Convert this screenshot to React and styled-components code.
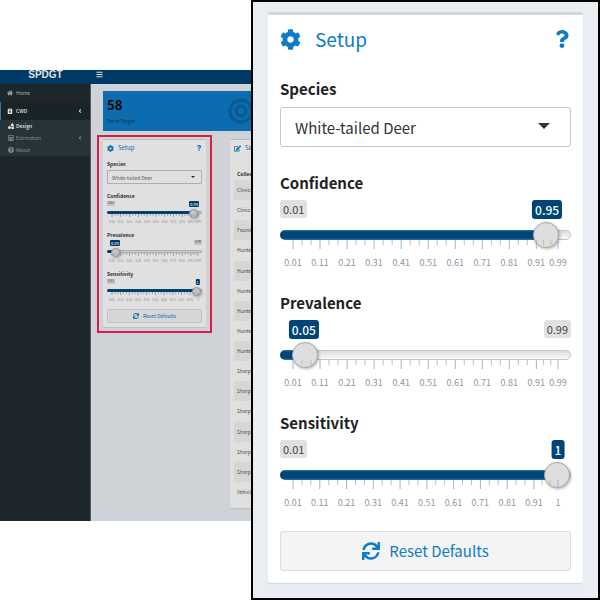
import React, { useId, useState } from "react";
import styled, { createGlobalStyle, ThemeProvider } from "styled-components";
import {
  FaAngleLeft,
  FaBars,
  FaBullseye,
  FaCalculator,
  FaCog,
  FaEdit,
  FaHome,
  FaNotesMedical,
  FaQuestion,
  FaQuestionCircle,
  FaShapes,
  FaSync,
} from "react-icons/fa";

const GlobalStyle = createGlobalStyle`
  *, *::before, *::after { box-sizing: border-box; }
  body {
    margin: 0;
    background: #fff;
    font-family: "Noto Sans CJK JP", "Noto Sans", sans-serif;
    color: #222;
  }
  button, input, select { font-family: inherit; margin: 0; }
  h1, h2, p, ul { margin: 0; padding: 0; }
`;

const large = {
  topBorder: 3, headHeight: 48, bodyTop: 14, pad: 12, radius: 3,
  title: 19, icon: 21, help: 18, iconGap: 14,
  label: 15, labelLine: 24, selectGap: 6, sliderGap: 5, fieldGap: 24,
  control: 40, select: 15, selectPad: 14, caretW: 12, caretH: 6, caretRight: 21,
  limit: 11, badge: 12, badgeH: 19, badgePad: 3, badgeRadius: 3,
  thumb: 26, track: 10, thumbTop: -9, rangeGap: 3, axisPull: 8, axisH: 27,
  tick: 9, minorTick: 5, axisFont: 9, axisBase: 26,
  button: 15, buttonIcon: 18, buttonGap: 9,
  selectColor: "#333", labelColor: "#222",
};

const small = {
  topBorder: 1, headHeight: 16, bodyTop: 4, pad: 4, radius: 1,
  title: 6, icon: 7, help: 6, iconGap: 4,
  label: 5, labelLine: 8, selectGap: 2, sliderGap: 1, fieldGap: 8,
  control: 14, select: 5, selectPad: 4, caretW: 4, caretH: 2, caretRight: 7,
  limit: 3, badge: 4, badgeH: 6, badgePad: 1, badgeRadius: 1,
  thumb: 9, track: 3, thumbTop: -3, rangeGap: 1, axisPull: 3, axisH: 9,
  tick: 3, minorTick: 2, axisFont: 3, axisBase: 9,
  button: 5, buttonIcon: 6, buttonGap: 4,
  selectColor: "#666", labelColor: "#333",
};

const m = (key) => ({ theme }) => `${theme[key]}px`;

/* Setup panel */

const Card = styled.section`
  background: #fff;
  border-top: ${m("topBorder")} solid #d2d6de;
  border-radius: ${m("radius")};
  box-shadow: 0 1px 1px rgba(0, 0, 0, 0.1);
`;

const CardHead = styled.header`
  display: flex;
  align-items: center;
  height: ${m("headHeight")};
  padding: 0 ${m("pad")};
  gap: ${m("iconGap")};
  color: #0d7dc8;
  svg { width: ${m("icon")}; height: ${m("icon")}; }
`;

const CardTitle = styled.h2`
  flex: 1;
  font-size: ${m("title")};
  line-height: ${m("labelLine")};
  font-weight: 400;
`;

const HelpButton = styled.button`
  display: flex;
  padding: 0;
  border: 0;
  background: none;
  color: inherit;
  svg { width: auto; height: ${m("help")}; }
`;

const CardBody = styled.div`
  padding: ${m("bodyTop")} ${m("pad")} ${m("pad")};
`;

const Field = styled.div`
  display: flex;
  flex-direction: column;
  margin-bottom: ${m("fieldGap")};
`;

const Label = styled.label`
  color: ${({ theme }) => theme.labelColor};
  font-size: ${m("label")};
  line-height: ${m("labelLine")};
  font-weight: 700;
`;

const SelectBox = styled.div`
  position: relative;
  display: flex;
  margin-top: ${m("selectGap")};
  &::after {
    content: "";
    position: absolute;
    right: ${m("caretRight")};
    top: 50%;
    margin-top: calc(${m("caretH")} * -2 / 3);
    border: solid transparent;
    border-width: ${m("caretH")} calc(${m("caretW")} / 2) 0;
    border-top-color: #333;
    pointer-events: none;
  }
`;

const Select = styled.select`
  appearance: none;
  flex: 1;
  min-width: 0;
  height: ${m("control")};
  padding: 0 ${m("selectPad")};
  border: 1px solid #c6c6c6;
  border-radius: ${m("badgeRadius")};
  background: #fff;
  color: ${({ theme }) => theme.selectColor};
  font-size: ${m("select")};
`;

const BadgeRow = styled.div`
  position: relative;
  display: flex;
  justify-content: space-between;
  height: ${m("badgeH")};
  margin-top: ${m("sliderGap")};
`;

const Limit = styled.span`
  height: calc(${m("badgeH")} - 1px);
  padding: 0 ${m("badgePad")};
  border-radius: ${m("badgeRadius")};
  background: #e1e1e1;
  color: #444;
  font-size: ${m("limit")};
  line-height: calc(${m("badgeH")} - 1px);
  visibility: ${({ $hidden }) => ($hidden ? "hidden" : "visible")};
`;

const ValueBadge = styled.output`
  position: absolute;
  left: calc(${m("thumb")} / 2 + (100% - ${m("thumb")}) * var(--ratio));
  transform: translateX(-50%);
  padding: 0 ${m("badgePad")};
  border-radius: ${m("badgeRadius")};
  background: #004577;
  color: #fff;
  font-size: ${m("badge")};
  font-weight: 500;
  line-height: ${m("badgeH")};
`;

const Range = styled.input`
  appearance: none;
  width: 100%;
  height: ${m("thumb")};
  margin: ${m("rangeGap")} 0 0;
  background: none;
  &::-webkit-slider-runnable-track {
    height: ${m("track")};
    border: 1px solid transparent;
    border-radius: ${m("track")};
    background:
      linear-gradient(#2a75b3, #004577 20%, #004577 80%, #2a75b3) 0 0 / calc(${m("thumb")} / 2 + (100% - ${m("thumb")}) * var(--ratio)) 100% no-repeat border-box,
      linear-gradient(#ddd, #eee 60%, #f8f8f8) padding-box,
      linear-gradient(#c4c4c4, #c4c4c4) border-box;
  }
  &::-webkit-slider-thumb {
    appearance: none;
    width: ${m("thumb")};
    height: ${m("thumb")};
    margin-top: ${m("thumbTop")};
    border: 1px solid #aaa;
    border-radius: 50%;
    background: #dedede;
    box-shadow: 1px 1px 3px rgba(0, 0, 0, 0.3);
  }
`;

const AxisBox = styled.div`
  height: ${m("axisH")};
  margin: calc(${m("axisPull")} * -1) calc(${m("thumb")} / 2) 0;
  pointer-events: none;
  svg { display: block; width: 100%; height: 100%; overflow: visible; }
  text { font-size: ${m("axisFont")}; fill: #8e989f; text-anchor: middle; }
`;

const TickLine = styled.line`
  stroke: ${({ $major }) => ($major ? "#8fb9de" : "#bcbcc4")};
  stroke-width: 1px;
`;

const ResetButton = styled.button`
  display: flex;
  align-items: center;
  justify-content: center;
  gap: ${m("buttonGap")};
  width: 100%;
  height: ${m("control")};
  padding: 0;
  border: 1px solid #ddd;
  border-radius: ${m("badgeRadius")};
  background: #f4f4f4;
  color: #0d7dc8;
  font-size: ${m("button")};
  line-height: ${m("labelLine")};
  svg { width: ${m("buttonIcon")}; height: ${m("buttonIcon")}; }
`;

function Axis({ max, metrics }) {
  const majors = [0.01, 0.11, 0.21, 0.31, 0.41, 0.51, 0.61, 0.71, 0.81, 0.91, max];
  const at = (v) => `${((v - 0.01) / (max - 0.01)) * 100}%`;
  const minors = majors.slice(0, -1).flatMap((v, i) => {
    const step = (majors[i + 1] - v) / 3;
    return [v + step, v + step * 2];
  });
  return (
    <AxisBox>
      <svg aria-hidden="true">
        {minors.map((v) => (
          <TickLine key={v} x1={at(v)} x2={at(v)} y1="0" y2={metrics.minorTick} />
        ))}
        {majors.map((v) => (
          <g key={v}>
            <TickLine $major x1={at(v)} x2={at(v)} y1="0" y2={metrics.tick} />
            <text x={at(v)} y={metrics.axisBase}>{v}</text>
          </g>
        ))}
      </svg>
    </AxisBox>
  );
}

function Slider({ label, max, value, onChange, metrics }) {
  const id = useId();
  const ratio = (value - 0.01) / (max - 0.01);
  return (
    <Field style={{ "--ratio": ratio }}>
      <Label htmlFor={id}>{label}</Label>
      <BadgeRow>
        <Limit $hidden={ratio < 0.12}>0.01</Limit>
        <Limit $hidden={ratio > 0.88}>{max}</Limit>
        <ValueBadge htmlFor={id}>{value}</ValueBadge>
      </BadgeRow>
      <Range
        id={id}
        type="range"
        min="0.01"
        max={max}
        step="0.01"
        value={value}
        onChange={(e) => onChange(Number(e.target.value))}
      />
      <Axis max={max} metrics={metrics} />
    </Field>
  );
}

const defaults = { Confidence: 0.95, Prevalence: 0.05, Sensitivity: 1 };
const limits = { Confidence: 0.99, Prevalence: 0.99, Sensitivity: 1 };

function SetupPanel({ metrics }) {
  const id = useId();
  const [values, setValues] = useState(defaults);
  return (
    <ThemeProvider theme={metrics}>
      <Card>
        <CardHead>
          <FaCog />
          <CardTitle>Setup</CardTitle>
          <HelpButton aria-label="Help"><FaQuestion /></HelpButton>
        </CardHead>
        <CardBody>
          <Field>
            <Label htmlFor={id}>Species</Label>
            <SelectBox>
              <Select id={id}><option>White-tailed Deer</option></Select>
            </SelectBox>
          </Field>
          {Object.keys(defaults).map((name) => (
            <Slider
              key={name}
              label={name}
              max={limits[name]}
              value={values[name]}
              metrics={metrics}
              onChange={(v) => setValues({ ...values, [name]: v })}
            />
          ))}
          <ResetButton onClick={() => setValues(defaults)}>
            <FaSync />
            Reset Defaults
          </ResetButton>
        </CardBody>
      </Card>
    </ThemeProvider>
  );
}

/* Page frame */

const Page = styled.main`
  display: grid;
  grid-template-columns: minmax(0, 251fr) minmax(0, 349fr);
  align-items: start;
  min-height: 100vh;
`;

const Detail = styled.div`
  align-self: stretch;
  padding: 10px 15px 14px;
  border: 2px solid #000;
  background: #eaeef3;
`;

/* Dashboard overview */

const Dashboard = styled.div`
  position: relative;
  display: grid;
  grid-template-columns: 91px minmax(0, 1fr);
  grid-template-rows: 14px auto;
  margin-top: 70px;
  overflow: hidden;
  background: #ecf0f5;
  &::after {
    content: "";
    position: absolute;
    inset: 0;
    z-index: 1;
    background: rgba(0, 0, 0, 0.12);
    pointer-events: none;
  }
`;

const Brand = styled.h1`
  background: #004475;
  color: #fff;
  font: 700 10px/10px "Liberation Sans", sans-serif;
  text-align: center;
`;

const TopBar = styled.div`
  padding: 1px 5px;
  background: #004475;
`;

const MenuButton = styled.button`
  display: flex;
  padding: 0;
  border: 0;
  background: none;
  color: #fff;
  svg { width: 7px; height: 7px; }
`;

const Sidebar = styled.nav`
  background: #222d32;
  border-right: 1px solid #5f666c;
`;

const NavLink = styled.a`
  display: flex;
  align-items: center;
  gap: ${({ $sub }) => ($sub ? 2 : 3)}px;
  height: ${({ $sub }) => ($sub ? 12 : 18)}px;
  padding: 0 7px 0 ${({ $sub }) => ($sub ? 7 : 6)}px;
  border-left: 1px solid ${({ $active }) => ($active ? "#3c8dbc" : "transparent")};
  background: ${({ $active }) => ($active ? "#1e282c" : "transparent")};
  color: ${({ $bright, $sub }) => ($bright ? "#fff" : $sub ? "#8aa4af" : "#b8c7ce")};
  font-size: 5px;
  font-weight: ${({ $bright }) => ($bright ? 500 : 400)};
  line-height: 8px;
  text-decoration: none;
  svg { width: 6px; height: 6px; }
  span { flex: 1; }
`;

const SubMenu = styled.div`
  background: #2c3b41;
`;

const Content = styled.div`
  display: grid;
  grid-template-columns: 103px 200px;
  gap: 8px 24px;
  align-items: start;
  padding: 7px 12px 13px;
`;

const ValueBox = styled.section`
  grid-column: 1 / -1;
  display: flex;
  align-items: center;
  height: 40px;
  padding: 0 4px;
  background: #0d7dc8;
  color: #000;
  svg { width: 26px; height: 26px; color: #0a67a8; }
`;

const ValueText = styled.div`
  flex: 0 0 121px;
`;

const BigNumber = styled.p`
  font-size: 13px;
  font-weight: 700;
  line-height: 20px;
`;

const Caption = styled.p`
  color: #12344e;
  font-size: 5px;
  line-height: 12px;
`;

const Highlight = styled.div`
  position: relative;
  &::after {
    content: "";
    position: absolute;
    inset: -4px -6px -6px;
    z-index: 2;
    border: 2px solid #dc1c42;
    pointer-events: none;
  }
`;

const Samples = styled.table`
  width: calc(100% - 8px);
  height: 334px;
  margin: 12px 4px 6px;
  border-collapse: collapse;
  color: #555;
  font-size: 5px;
  line-height: 8px;
  text-align: left;
  th, td { padding: 0 3px; }
  th { height: 12px; color: #333; }
  tbody tr:nth-child(odd) { background: #f4f4f4; }
`;

const rows = [
  "Clinical", "Clinical", "Found",
  "Hunter", "Hunter", "Hunter", "Hunter", "Hunter", "Hunter",
  "Sharps", "Sharps", "Sharps", "Sharps", "Sharps", "Sharps",
  "Vehicle",
];

function SamplesPanel() {
  return (
    <ThemeProvider theme={small}>
      <Card>
        <CardHead>
          <FaEdit />
          <CardTitle>Samples</CardTitle>
        </CardHead>
        <Samples>
          <thead><tr><th>Collection</th></tr></thead>
          <tbody>
            {rows.map((name, i) => <tr key={i}><td>{name}</td></tr>)}
          </tbody>
        </Samples>
      </Card>
    </ThemeProvider>
  );
}

export default function App() {
  return (
    <Page>
      <GlobalStyle />
      <Dashboard>
        <Brand>SPDGT</Brand>
        <TopBar>
          <MenuButton aria-label="Toggle menu"><FaBars /></MenuButton>
        </TopBar>
        <Sidebar>
          <NavLink href="#home"><FaHome /><span>Home</span></NavLink>
          <NavLink href="#cwd" $active $bright><FaNotesMedical /><span>CWD</span><FaAngleLeft /></NavLink>
          <SubMenu>
            <NavLink href="#design" $sub $bright><FaShapes /><span>Design</span></NavLink>
            <NavLink href="#estimation" $sub><FaCalculator /><span>Estimation</span><FaAngleLeft /></NavLink>
            <NavLink href="#about" $sub><FaQuestionCircle /><span>About</span></NavLink>
          </SubMenu>
        </Sidebar>
        <Content>
          <ValueBox>
            <ValueText>
              <BigNumber>58</BigNumber>
              <Caption>Point Target</Caption>
            </ValueText>
            <FaBullseye />
          </ValueBox>
          <Highlight><SetupPanel metrics={small} /></Highlight>
          <SamplesPanel />
        </Content>
      </Dashboard>
      <Detail><SetupPanel metrics={large} /></Detail>
    </Page>
  );
}
